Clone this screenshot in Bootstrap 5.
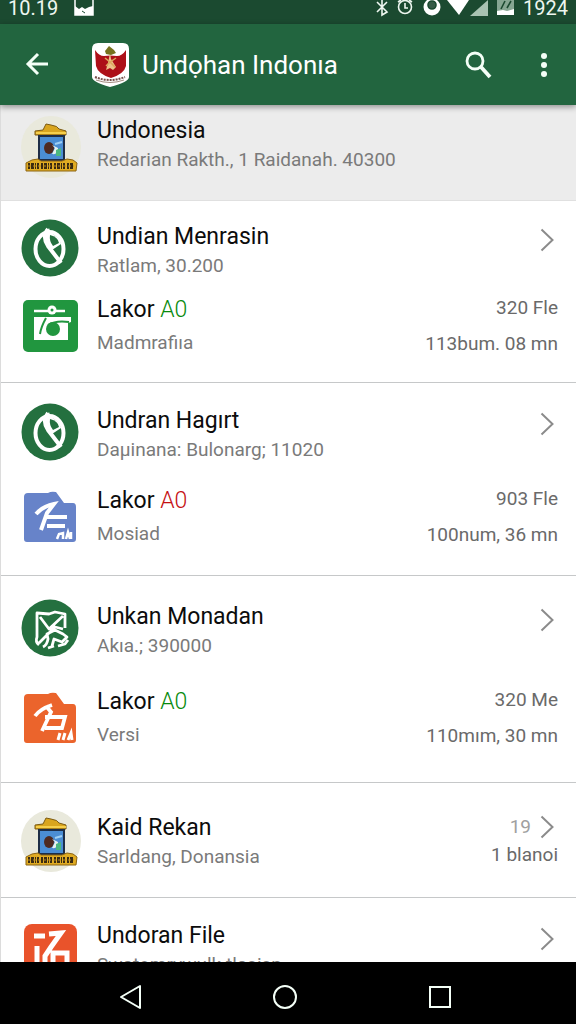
<!DOCTYPE html>
<html lang="id">
<head>
<meta charset="utf-8">
<meta name="viewport" content="width=device-width, initial-scale=1">
<title>Undọhan Indonıa</title>
<link href="https://cdn.jsdelivr.net/npm/bootstrap@5.3.0/dist/css/bootstrap.min.css" rel="stylesheet">
<style>
body { font-family: Roboto, "Liberation Sans", sans-serif; background: #fff; color: #0c0c0c; }
svg { display: block; flex-shrink: 0; }
.status { background: #1b4a30; color: #eef7f0; height: 24px; padding: 0 8px; font-size: 20px; line-height: 16px; }
.appbar { background: #22653f; height: 81px; padding: 0 20px; box-shadow: 0 2px 6px rgba(0,0,0,.4); z-index: 1; }
.appbar h1 { font-size: 26px; line-height: 36px; padding-left: 12px; }
.tool { background: none; border: 0; padding: 0; color: #f4fff7; }
.search { margin-right: 40px; }
.feed { border-left: 1px solid #dcdcdc; }
.block { border-bottom: 1px solid #c6c8c9; padding: 20px 18px 22px 20px; }
.intro { background: #ececec; border-color: #e0e0e0; padding-top: 11px; padding-bottom: 22px; }
.first { padding-top: 18px; padding-bottom: 20px; }
.third { padding-top: 23px; padding-bottom: 28px; }
.fourth { padding-top: 27px; padding-bottom: 25px; }
.entry { color: inherit; }
.pic { width: 60px; margin-right: 16px; }
.name { font-size: 23px; line-height: 30px; font-weight: 400; }
.note { font-size: 19px; line-height: 28px; color: #7a7a7a; font-weight: 400; }
.words { padding-top: 3px; }
.file .name { line-height: 34px; }
.file .note { line-height: 32px; }
.file .amount { font-size: 19px; line-height: 36px; color: #6a6a6a; font-weight: 400; }
.go { padding: 9px 4px 0 0; color: #8b8b8b; }
.near { margin-top: 10px; }
.mid { margin-top: 17px; }
.far { margin-top: 22px; }
.ok { color: #078a0c; font-weight: 300; }
.bad { color: #c50f12; font-weight: 300; }
.faint { color: #a0a0a0; padding-right: 9px; }
.count { color: #6a6a6a; }
.keys { background: #000; color: #fff; height: 62px; padding: 0 122px 0 116px; }
</style>
</head>
<body>
<svg width="0" height="0" class="position-absolute" aria-hidden="true">
  <defs>
    <symbol id="chev" viewBox="0 0 14 24"><path d="M1.500 1.500 12.500 12 1.500 22.500" fill="none" stroke="currentColor" stroke-width="2"/></symbol>
    <symbol id="leaf" viewBox="0 0 58 58">
      <circle cx="29" cy="29" r="28.500" fill="#24703f"/>
      <ellipse cx="28.500" cy="30" rx="14" ry="17" fill="none" stroke="#fff" stroke-width="4"/>
      <path d="M27 10c-4 5-4 11 0 17L40 44" fill="none" stroke="#fff" stroke-width="4"/>
      <path d="M28 9q1 5 7 8 5 4 5 8l-9 6-5-8q-3-8 2-14Z" fill="#fff"/>
      <path d="M29 16q8 2 9 8l-6 3q-4-5-3-11Z" fill="#24703f"/>
    </symbol>
    <symbol id="house" viewBox="0 0 60 62">
      <ellipse cx="30" cy="31" rx="30" ry="31" fill="#e9e9dc"/>
      <path d="m22 14 3-6 5 1q7 1 8 4l7 2v4H14v-4Z" fill="#d9a51e" stroke="#7b5b14" stroke-width="1"/>
      <path d="M15 17h30" stroke="#f5cf4c" stroke-width="2"/>
      <path d="M18 20h25v24H18Z" fill="#4b8ed4" stroke="#1e2d46" stroke-width="2"/>
      <ellipse cx="28" cy="32" rx="5" ry="6" fill="#4e2a20"/>
      <path d="m31 29 3 3-3 6c5 1 6-3 6-6Z" fill="#e9f3ef"/>
      <path d="m35 34 5-2v8h-5Z" fill="#4bb880"/><path d="m34 28 7-2" stroke="#9fd0f5" stroke-width="2"/>
      <path d="m11 44 6-1 3 2h21l5-2 6 1 4 3-1 8H5v-8Z" fill="#e0ab22" stroke="#8c6412" stroke-width="1"/>
      <path d="M7 50h46" stroke="#3b2b10" stroke-width="6" stroke-dasharray="2 1 3 1 1 1 2 2"/>
      <path d="M7 50h46" stroke="#b98a22" stroke-width="1" stroke-dasharray="3 2"/>
    </symbol>
  </defs>
</svg>
<div class="vh-100 d-flex flex-column overflow-hidden">
  <div class="status d-flex flex-shrink-0 align-items-start justify-content-between">
    <div class="d-flex"><span class="me-3">10.19</span>
      <svg width="20" height="16" viewBox="0 0 20 16"><path d="M1 0v15h18V0" fill="none" stroke="#fff" stroke-width="1.500"/><path d="M1 6l4 3 3-2 3 2 4-2 4-1v9H1Z" fill="#fff"/><path d="m8 11 3 2" stroke="#1b4a30"/></svg>
    </div>
    <div class="d-flex">
      <svg width="146" height="17" viewBox="0 0 146 17" fill="none" stroke="#eef7f0" stroke-width="1.600">
        <path d="M4 2l10 10-5 3V0m-5 12L14 2"/>
        <circle cx="32" cy="7" r="6.500"/><path d="M32 3v5h3M25 2l3-2m11 2-3-2"/>
        <circle cx="59" cy="7" r="8.500" fill="#fff" stroke="none"/><circle cx="59" cy="5" r="4" fill="#365b47" stroke="#1b4a30"/>
        <path d="M74 0h22L86 15Z" fill="#fff" stroke="none"/><path d="M97 16 115 0v16Z" fill="#a9c3b2" stroke="none"/>
        <path d="M124 0h17v15h-17Z" fill="#86a692" stroke="none"/><path d="M124 11l6-1 4 1 7-2v6h-17Z" fill="#fff" stroke="none"/><path d="m128 9 4-8m2 7 4-7" stroke="#1b4a30"/>
      </svg>
      <span class="ps-1">1924</span>
    </div>
  </div>
  <header class="appbar d-flex flex-shrink-0 align-items-center position-relative">
    <button class="tool" aria-label="Kembali"><svg width="34" height="28" viewBox="0 0 34 28"><path d="M28 13H8M18 3 8 13l10 10" fill="none" stroke="currentColor" stroke-width="3"/></svg></button>
    <svg width="76" height="46" viewBox="0 0 76 46">
      <path d="M44 1h25q6 0 6 6v28q0 5-19 10-18-5-18-10V7q0-6 6-6Z" fill="#fff"/>
      <path d="M41 8q4 6 9 6 6-1 13 0 5 0 9-6v16q-2 8-15 12-13-4-15-12Z" fill="#ad1018"/>
      <path d="m56 11 1 6 5 8-3 3-3-2-4 2 2-7 1-5Z" fill="#edc189"/><path d="m51 9 4-5 5 4 2 3-5 2-5-1Z" fill="#75711d"/>
      <path d="m51 16 5 4 6-4m-10 8 4-4 5 5" stroke="#dca75b" stroke-width="1.500" fill="none"/>
      <path d="M41 35q15 6 30 0" fill="none" stroke="#77504a" stroke-width="2" stroke-dasharray="2 1"/><path d="M42 38q14 5 28 0" fill="none" stroke="#a38a80"/>
    </svg>
    <h1 class="mb-0 fw-normal text-white flex-fill text-nowrap">Undọhan Indonıa</h1>
    <button class="tool search" aria-label="Cari"><svg width="28" height="28" viewBox="0 0 28 28" fill="none" stroke="currentColor"><circle cx="11" cy="10" r="8" stroke-width="2.800"/><path d="m17 16 9 10" stroke-width="3.800"/></svg></button>
    <button class="tool" aria-label="Menu"><svg width="24" height="28" viewBox="0 0 24 28" fill="currentColor"><circle cx="12" cy="5" r="3"/><circle cx="12" cy="14" r="3"/><circle cx="12" cy="23" r="3"/></svg></button>
  </header>
  <main class="feed flex-fill overflow-hidden">
    <section class="block intro">
      <a href="#" class="entry d-flex text-decoration-none">
        <div class="pic"><svg width="60" height="62"><use href="#house"/></svg></div>
        <div><div class="name">Undonesia</div><div class="note text-nowrap">Redarian Rakth., 1 Raidanah. 40300</div></div>
      </a>
    </section>
    <section class="block first">
      <a href="#" class="entry d-flex text-decoration-none">
        <div class="pic"><svg width="58" height="58"><use href="#leaf"/></svg></div>
        <div class="words flex-fill"><div class="name">Undian Menrasin</div><div class="note">Ratlam, 30.200</div></div>
        <div class="go"><svg width="14" height="24"><use href="#chev"/></svg></div>
      </a>
      <div class="file near d-flex align-items-center">
        <div class="pic"><svg width="58" height="54" viewBox="0 0 58 54"><rect x="2" y="1" width="55" height="52" rx="5" fill="#21963f"/><path d="M13 12h31" stroke="#fff" stroke-width="2.500"/><circle cx="31" cy="11" r="4.500" fill="#fff"/><circle cx="31" cy="11" r="1.500" fill="#21963f"/><path d="M12 18h38v5l-3 1v17H13V18Z" fill="#fff"/><path d="M25 19q-5 9-6 16M27 26q8-5 21-3" fill="none" stroke="#21963f" stroke-width="2"/><circle cx="32" cy="30" r="7" fill="#21963f"/></svg></div>
        <div class="flex-fill"><div class="name">Lakor <span class="ok">A0</span></div><div class="note">Madmrafiıa</div></div>
        <div class="amount text-end text-nowrap"><div>320 Fle</div><div>113bum. 08 mn</div></div>
      </div>
    </section>
    <section class="block">
      <a href="#" class="entry d-flex text-decoration-none">
        <div class="pic"><svg width="58" height="58"><use href="#leaf"/></svg></div>
        <div class="words flex-fill"><div class="name">Undran Hagırt</div><div class="note">Daµinana: Bulonarg; 11020</div></div>
        <div class="go"><svg width="14" height="24"><use href="#chev"/></svg></div>
      </a>
      <div class="file mid d-flex align-items-center">
        <div class="pic"><svg width="58" height="54" viewBox="0 0 58 54"><path d="M7 3h20q3-2 8-1l8 11h9q3 0 3 4v32q0 3-3 3H6q-3 0-3-3V7q0-4 4-4Z" fill="#6783c9"/><path d="M15 24q7-8 18-10l-7 9-6 17m4-13h22m-20 9h18" fill="none" stroke="#fff" stroke-width="4"/><path d="m36 49 2-5 4-1v6m3 0 2-7 2 7m1-7v7" fill="none" stroke="#fff" stroke-width="2.500"/></svg></div>
        <div class="flex-fill"><div class="name">Lakor <span class="bad">A0</span></div><div class="note">Mosiad</div></div>
        <div class="amount text-end text-nowrap"><div>903 Fle</div><div>100num, 36 mn</div></div>
      </div>
    </section>
    <section class="block third">
      <a href="#" class="entry d-flex text-decoration-none">
        <div class="pic"><svg width="58" height="58" viewBox="0 0 58 58"><circle cx="29" cy="29" r="28.500" fill="#24703f"/><path d="M18 46q-4-3-2-8V14l12 1 6-2 10 2v14M18 44l8-8 8-8 8 2M19 18l9 12 14-13M22 48q4-2 5-8l-1-5 8-4 8 4 4 3-5 5-8-3-2 7m-4 2 6-2m4 0 7-2 3-4" fill="none" stroke="#fff" stroke-width="2.800" stroke-linejoin="round"/></svg></div>
        <div class="words flex-fill"><div class="name">Unkan Monadan</div><div class="note">Akıa.; 390000</div></div>
        <div class="go"><svg width="14" height="24"><use href="#chev"/></svg></div>
      </a>
      <div class="file far d-flex align-items-center">
        <div class="pic"><svg width="58" height="54" viewBox="0 0 58 54"><path d="M7 3h20q3-2 8-1l8 11h9q3 0 3 4v32q0 3-3 3H6q-3 0-3-3V7q0-4 4-4Z" fill="#eb642c"/><path d="M14 25q5-7 17-11m-6 1 5 6-9 19m3-14h20l-3 11H24" fill="none" stroke="#fff" stroke-width="3.800"/><path d="m37 49 2-7m3 7 2-7m3 7 3-7 1 7" fill="none" stroke="#fff" stroke-width="3"/></svg></div>
        <div class="flex-fill"><div class="name">Lakor <span class="ok">A0</span></div><div class="note">Versi</div></div>
        <div class="amount text-end text-nowrap"><div>320 Me</div><div>110mım, 30 mn</div></div>
      </div>
    </section>
    <section class="block fourth">
      <a href="#" class="entry d-flex text-decoration-none">
        <div class="pic"><svg width="60" height="62"><use href="#house"/></svg></div>
        <div class="words flex-fill"><div class="name">Kaid Rekan</div><div class="note">Sarldang, Donansia</div></div>
        <div class="words">
          <div class="d-flex justify-content-end align-items-center pe-1"><span class="note faint">19</span><svg width="14" height="24" color="#8b8b8b"><use href="#chev"/></svg></div>
          <div class="note count">1 blanoi</div>
        </div>
      </a>
    </section>
    <section class="block">
      <a href="#" class="entry d-flex text-decoration-none">
        <div class="pic"><svg width="58" height="60" viewBox="0 0 58 60"><rect x="3" y="6" width="53" height="54" rx="8" fill="#e9532b"/><path d="M13 18h11M16 28v24" fill="none" stroke="#fff" stroke-width="5"/><path d="m28 16 12-1-10 14-6 9v14M32 44v-9h14v12" fill="none" stroke="#fff" stroke-width="5"/></svg></div>
        <div class="words flex-fill"><div class="name">Undoran File</div><div class="note">Swatomrvwulk tlasisn</div></div>
        <div class="go"><svg width="14" height="24"><use href="#chev"/></svg></div>
      </a>
    </section>
  </main>
  <nav class="keys d-flex flex-shrink-0 align-items-center justify-content-between pt-2">
    <button class="tool" aria-label="Mundur"><svg width="28" height="28" viewBox="0 0 28 28"><path d="M24 3v22L5 14Z" fill="none" stroke="currentColor" stroke-width="2" stroke-linejoin="round"/></svg></button>
    <button class="tool" aria-label="Beranda"><svg width="28" height="28" viewBox="0 0 28 28"><circle cx="14" cy="14" r="11" fill="none" stroke="currentColor" stroke-width="2"/></svg></button>
    <button class="tool" aria-label="Terbaru"><svg width="28" height="28" viewBox="0 0 28 28"><rect x="4" y="4" width="20" height="20" fill="none" stroke="currentColor" stroke-width="2"/></svg></button>
  </nav>
</div>
<script src="https://cdn.jsdelivr.net/npm/bootstrap@5.3.0/dist/js/bootstrap.bundle.min.js"></script>
</body>
</html>
